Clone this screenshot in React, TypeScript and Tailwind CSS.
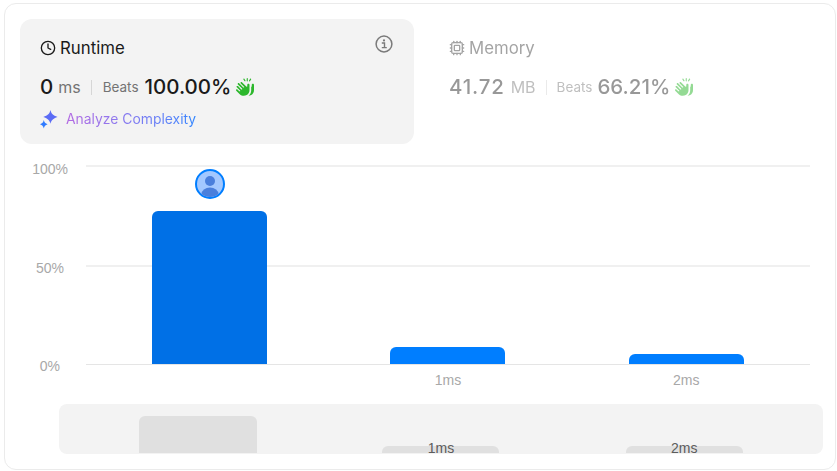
import React from 'react';
import { FaHandsClapping } from 'react-icons/fa6';
import { Clock4, Cpu } from 'lucide-react';

const bars = [
  { label: '', h: 'h-[153px]', color: 'bg-[#0070e6]', ghost: 'h-[37px] w-[118px] rounded-t-[6px]' },
  { label: '1ms', h: 'h-[17px]', color: 'bg-[#007eff]', ghost: 'h-[7px] w-[117px] rounded-t-[6px]' },
  { label: '2ms', h: 'h-[10px]', color: 'bg-[#007eff]', ghost: 'h-[7px] w-[117px] rounded-t-[6px]' },
];

const App: React.FC = () => {
  return (
    <div className="h-[471px] w-[837px] bg-white pl-1 pt-[3px] font-['Inter',sans-serif]">
      <div className="h-[467px] w-[832px] rounded-[12px] border border-[#ebebeb] px-[15px] pt-[15px]">
        <div className="flex gap-[16px]">
          <div className="relative h-[125px] w-[394px] rounded-[12px] bg-[#f3f3f3] px-5 pt-[18px]">
            <div className="flex h-6 items-center gap-[4px] text-[16.8px] text-[#1a1a1a]">
              <Clock4 size={16} strokeWidth={2} className="-mt-[2px]" />
              <span>Runtime</span>
            </div>
            <svg viewBox="0 0 18 18" className="absolute right-[21px] top-[16px] h-[18px] w-[18px]" fill="none">
              <circle cx="9" cy="9" r="7.9" stroke="#7a7a7a" strokeWidth="1.5" />
              <circle cx="9" cy="5.4" r="1.1" fill="#7a7a7a" />
              <path d="M6.8 8h2.7v4.4M6.8 12.6h5" stroke="#7a7a7a" strokeWidth="1.4" />
            </svg>
            <div className="mt-[12px] flex h-[28px] items-center">
              <span className="text-[20.5px] font-medium text-[#1a1a1a]">0</span>
              <span className="ml-[5px] text-[16px] text-[#737373]">ms</span>
              <span className="ml-[10px] h-[15px] w-[1px] bg-[#d6d6d6]" />
              <span className="ml-[11px] text-[13.5px] text-[#737373]">Beats</span>
              <span className="ml-[6px] text-[20.5px] font-medium text-[#1a1a1a]">100.00%</span>
              <FaHandsClapping className="ml-[5px] text-[#2cb72c]" size={18} />
            </div>
            <div className="mt-[8px] flex h-5 items-center gap-[7px]">
              <svg viewBox="0 0 20 20" className="h-[19px] w-[19px]">
                <path d="M11 0 C11.9 4 13.6 5.6 18.5 7.3 C13.6 9 11.9 10.6 11 14.6 C10.1 10.6 8.4 9 3.5 7.3 C8.4 5.6 10.1 4 11 0 Z" fill="#5b6cf5" />
                <path d="M4 10.6 C4.5 13 5.6 14.2 8 15 C5.6 15.8 4.5 17 4 19.4 C3.5 17 2.4 15.8 0 15 C2.4 14.2 3.5 13 4 10.6 Z" fill="#2f7bff" />
              </svg>
              <span className="bg-gradient-to-r from-[#b36ae2] to-[#2f86ff] bg-clip-text text-[13.9px] text-transparent">
                Analyze Complexity
              </span>
            </div>
          </div>

          <div className="pl-[19px] pt-[18px] opacity-50">
            <div className="flex h-6 items-center gap-[4px] text-[16.8px] text-[#4a4a4a]">
              <Cpu size={16} strokeWidth={2} className="-mt-[2px]" />
              <span>Memory</span>
            </div>
            <div className="mt-[12px] flex h-[28px] items-center">
              <span className="text-[20.5px] font-medium tracking-[0.8px] text-[#333333]">41.72</span>
              <span className="ml-[6px] text-[16px] text-[#808080]">MB</span>
              <span className="ml-[10px] h-[15px] w-[1px] bg-[#d6d6d6]" />
              <span className="ml-[10px] text-[13.5px] text-[#808080]">Beats</span>
              <span className="ml-[5px] text-[20.5px] font-medium text-[#333333]">66.21%</span>
              <FaHandsClapping className="ml-[5px] text-[#2cb72c]" size={18} />
            </div>
          </div>
        </div>

        <div className="mt-[21px] font-['Liberation_Sans',sans-serif] text-[14px] text-[#a8a8a8]">
          <div className="relative ml-[66px] h-[199px] w-[724px]">
            <div className="absolute left-0 right-0 top-0 h-[2px] bg-[#f0f0f0]" />
            <div className="absolute left-0 right-0 top-[100px] h-[2px] bg-[#f0f0f0]" />
            <div className="absolute left-0 right-0 top-[199px] h-[1px] bg-[#e5e5e5]" />
            <span className="absolute right-full top-[-6px] mr-[18px]">100%</span>
            <span className="absolute right-full top-[93px] mr-[22px]">50%</span>
            <span className="absolute right-full top-[191px] mr-[26px]">0%</span>
            <div className="absolute inset-0 grid grid-cols-3 px-[4.5px]">
              {bars.map((bar, i) => (
                <div key={i} className="relative flex flex-col items-center justify-end">
                  {i === 0 && (
                    <svg viewBox="0 0 30 30" className="mb-[12px] h-[30px] w-[30px]">
                      <defs>
                        <clipPath id="avatar">
                          <circle cx="15" cy="15" r="13" />
                        </clipPath>
                      </defs>
                      <circle cx="15" cy="15" r="14" fill="#a3c8ff" stroke="#007eff" strokeWidth="2" />
                      <g clipPath="url(#avatar)" fill="#4a7fdc">
                        <circle cx="15" cy="12" r="5" />
                        <ellipse cx="15" cy="25" rx="8.5" ry="6.5" />
                      </g>
                    </svg>
                  )}
                  <div className={`w-[115px] rounded-t-[6px] ${bar.h} ${bar.color}`} />
                  <span className="absolute top-full mt-[8px] h-4 leading-4">{bar.label}</span>
                </div>
              ))}
            </div>
          </div>
        </div>

        <div className="ml-[39px] mt-[40px] grid h-[50px] w-[764px] grid-cols-3 items-end rounded-[8px] bg-[#f3f3f3] px-[17px] pb-[1px] font-['Liberation_Sans',sans-serif] text-[14px] text-[#5c5c5c]">
          {bars.map((bar, i) => (
            <div key={i} className="relative flex flex-col items-center justify-end">
              <span className="absolute bottom-[-1px] z-10 leading-[12px]">{bar.label}</span>
              <div className={`bg-[#e0e0e0] ${bar.ghost}`} />
            </div>
          ))}
        </div>
      </div>
    </div>
  );
};

export default App;
